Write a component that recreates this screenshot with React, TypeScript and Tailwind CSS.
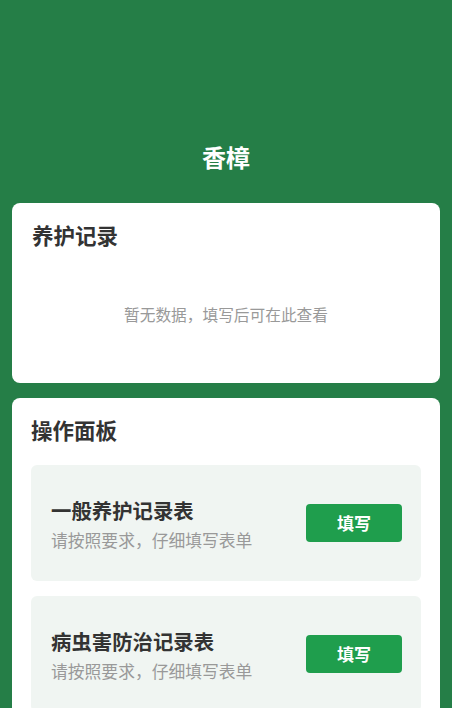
import React from "react";

const items = ["一般养护记录表", "病虫害防治记录表"];

export default function App() {
  return (
    <div
      className="min-h-[708px] w-full bg-[#257e47] overflow-hidden"
      style={{ fontFamily: '"Noto Sans CJK SC", "Noto Sans", sans-serif' }}
    >
      <div className="pt-[142px] pb-[31px] text-center text-[24px] leading-[30px] font-bold text-white">
        香樟
      </div>
      <div className="mx-[12px] rounded-[8px] bg-white px-[20px] pt-[18px] pb-[57px]">
        <div className="text-[21.5px] leading-[28px] font-bold text-[#333333]">养护记录</div>
        <div className="mt-[55px] text-center text-[15.7px] leading-[22px] text-[#999999]">
          暂无数据，填写后可在此查看
        </div>
      </div>
      <div className="mx-[12px] mt-[15px] rounded-[8px] bg-white px-[19px] pt-[18px] pb-[20px]">
        <div className="text-[21.5px] leading-[28px] font-bold text-[#333333]">操作面板</div>
        <div className="mt-[21px] flex flex-col gap-[15px]">
          {items.map((t) => (
            <div
              key={t}
              className="flex h-[116px] items-center justify-between rounded-[6px] bg-[#f0f5f2] pl-[20px] pr-[19px]"
            >
              <div className="pt-[2px]">
                <div className="text-[20.4px] leading-[26px] font-bold text-[#333333]">{t}</div>
                <div className="mt-[5px] text-[16.8px] leading-[24px] text-[#999999]">
                  请按照要求，仔细填写表单
                </div>
              </div>
              <button className="flex h-[38px] w-[96px] items-center justify-center rounded-[4px] bg-[#1f9e4d] text-[17px] font-bold text-white">
                填写
              </button>
            </div>
          ))}
        </div>
      </div>
    </div>
  );
}
